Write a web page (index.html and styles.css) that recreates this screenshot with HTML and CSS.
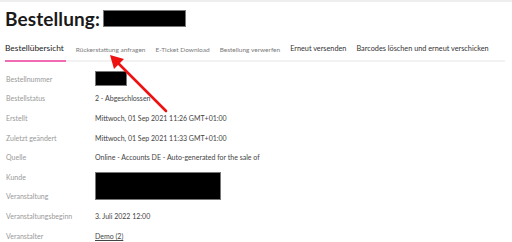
FILE: index.html
```html
<!DOCTYPE html>
<html lang="de">
<head>
<meta charset="utf-8">
<link rel="stylesheet" href="styles.css">
</head>
<body>
<div class="topbar"></div>
<header class="head">
  <h1 class="title">Bestellung:</h1>
  <span class="redact redact-title"></span>
</header>
<nav class="tabs">
  <span class="tab active">Bestellübersicht</span>
  <span class="tab small">Rückerstattung anfragen</span>
  <span class="tab small">E-Ticket Download</span>
  <span class="tab small">Bestellung verwerfen</span>
  <span class="tab">Erneut versenden</span>
  <span class="tab">Barcodes löschen und erneut verschicken</span>
</nav>
<dl class="details">
  <dt>Bestellnummer</dt><dd><span class="redact redact-num"></span></dd>
  <dt>Bestellstatus</dt><dd>2 - Abgeschlossen</dd>
  <dt>Erstellt</dt><dd>Mittwoch, 01 Sep 2021 11:26 GMT+01:00</dd>
  <dt>Zuletzt geändert</dt><dd>Mittwoch, 01 Sep 2021 11:33 GMT+01:00</dd>
  <dt>Quelle</dt><dd>Online - Accounts DE - Auto-generated for the sale of</dd>
  <dt>Kunde</dt><dd class="rel"><span class="redact redact-kunde"></span></dd>
  <dt>Veranstaltung</dt><dd></dd>
  <dt>Veranstaltungsbeginn</dt><dd>3. Juli 2022 12:00</dd>
  <dt>Veranstalter</dt><dd><a class="link">Demo (2)</a></dd>
</dl>
<svg class="arrow" width="80" height="70" viewBox="0 0 80 70">
  <line x1="58" y1="58" x2="8" y2="8" stroke="#ee1111" stroke-width="2.6" stroke-linecap="round"/>
  <polygon points="2,2 16,6 6,16" fill="#ee1111"/>
</svg>
</body>
</html>
```
FILE: styles.css
```css
* { box-sizing: border-box; }
html, body { margin: 0; padding: 0; background: #fff; }
body {
  font-family: "Lato", "Noto Sans", sans-serif;
  color: #333;
  position: relative;
  width: 512px;
  height: 242px;
  overflow: hidden;
}
.topbar { height: 2px; background: #eeeeee; }
.head {
  display: flex;
  align-items: center;
  gap: 3px;
  padding: 4px 0 0 5px;
  height: 28px;
}
.title {
  margin: 0;
  font-size: 19px;
  font-weight: 700;
  color: #1a1a1a;
  letter-spacing: 0.1px;
}
.redact { display: inline-block; background: #000; border: 1px solid #777; }
.redact-title { width: 83px; height: 17px; margin-top: 1px; }
.tabs {
  display: flex;
  align-items: flex-end;
  margin: 13px 7px 0 5px;
  border-bottom: 2px solid #f2f2f2;
  gap: 10px;
}
.tab {
  font-size: 7.3px;
  color: #333;
  padding-bottom: 7px;
  white-space: nowrap;
}
.tab.small { font-size: 6.5px; color: #7a7a7a; padding-bottom: 7.5px; }
.tab.active {
  color: #222;
  font-size: 8.4px;
  border-bottom: 2px solid #f06ab4;
  margin-bottom: -2px;
  padding-right: 2px;
  padding-bottom: 7px;
}
.details {
  display: grid;
  grid-template-columns: 89px 1fr;
  grid-auto-rows: 19.6px;
  margin: 7px 0 0 6px;
  font-size: 7px;
  align-items: center;
}
.details dt { color: #999; }
.details dd { margin: 0; color: #444; white-space: nowrap; }
.redact-num { width: 32px; height: 15px; vertical-align: middle; }
.rel { position: relative; }
.redact-kunde { position: absolute; left: 0; top: -5px; width: 126px; height: 28px; }
.link { color: #444; text-decoration: underline; }
.arrow { position: absolute; left: 108px; top: 53px; }
```
